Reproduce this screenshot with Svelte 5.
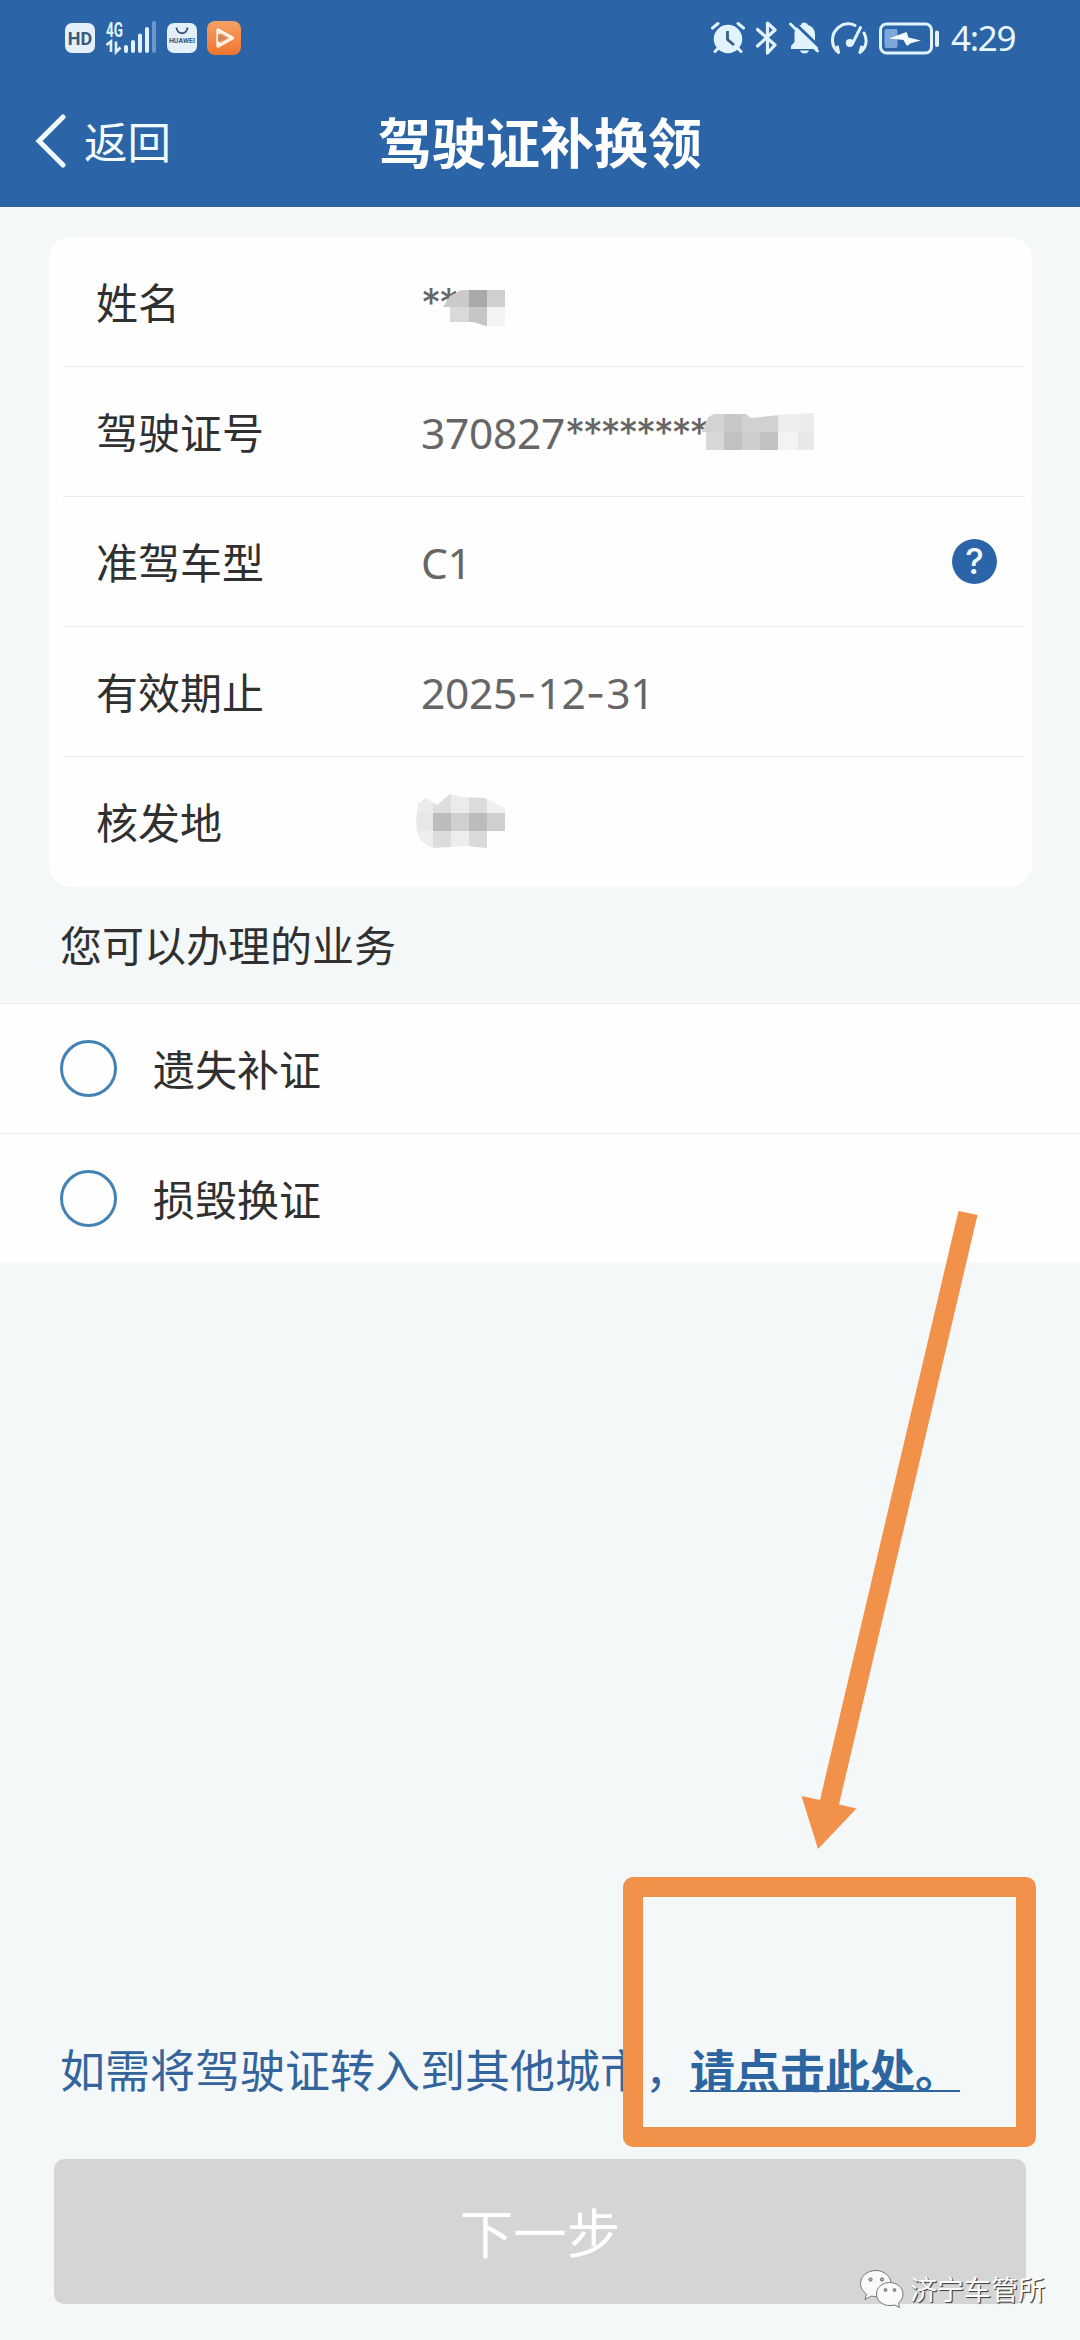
<script>
    let selected = null;

    const details = [
        { key: 'name', label: '姓名', value: '', mask: '**' },
        { key: 'number', label: '驾驶证号', value: '370827', mask: '********' },
        { key: 'type', label: '准驾车型', value: 'C1', mask: '', help: true },
        { key: 'expiry', label: '有效期止', value: '2025-12-31', mask: '' },
        { key: 'issuer', label: '核发地', value: '', mask: '' }
    ];

    // x, y, width, height, fill
    const mosaics = {
        name: {
            x: 22, y: -24, w: 64, h: 50,
            outline: 'M0 29 L7 18 L18 12 H62 V48 H43 L30 44 H7 V29Z',
            cells: [
                [0, 10, 26, 19, '#cbc9ca'], [26, 10, 18, 19, '#aaa8a9'], [44, 10, 18, 19, '#d0cfd0'],
                [0, 29, 26, 20, '#dad9da'], [26, 29, 18, 20, '#c7c6c7'], [44, 29, 18, 20, '#f5f4f5']
            ]
        },
        number: {
            x: 279, y: -21, w: 124, h: 42,
            outline: 'M2 21 L8 6 L14 3 H46 L51 7 L80 4 L114 2 V39 H6 V21Z',
            cells: [
                [0, 0, 24, 21, '#d4d3d4'], [24, 0, 18, 21, '#c9c8c9'], [42, 0, 36, 21, '#d2d0d1'], [78, 0, 20, 21, '#eeeeef'], [98, 0, 18, 21, '#ececec'],
                [0, 21, 24, 19, '#d9d8d9'], [24, 21, 18, 19, '#c2c1c2'], [42, 21, 18, 19, '#cfcdce'], [60, 21, 18, 19, '#c3c2c3'], [78, 21, 20, 19, '#f3f3f4'], [98, 21, 18, 19, '#e9e8e9']
            ]
        },
        issuer: {
            x: -7, y: -32, w: 94, h: 60,
            outline: 'M2 30 L4 14 L12 8 L23 15 L36 4 L48 7 L70 8 L91 18 V41 L73 43 V58 L52 56 L36 57 L18 58 L7 51 L3 42Z',
            cells: [
                [0, 0, 19, 23, '#ecebec'], [19, 0, 18, 23, '#dfdddf'], [37, 0, 18, 23, '#ecebec'], [55, 0, 18, 23, '#dcdadb'], [73, 0, 19, 23, '#f0eff0'],
                [0, 23, 19, 18, '#e8e6e7'], [19, 23, 18, 18, '#bdbbbc'], [37, 23, 18, 18, '#d1d0d1'], [55, 23, 18, 18, '#bdbcbd'], [73, 23, 19, 18, '#d0cecf'],
                [0, 41, 19, 19, '#efeeef'], [19, 41, 18, 19, '#dddbdc'], [37, 41, 18, 19, '#edecee'], [55, 41, 18, 19, '#dbdadb']
            ]
        }
    };

    const options = ['遗失补证', '损毁换证'];
</script>

<div class="screen">
    <div class="top">
        <div class="status">
            <div class="status-left">
                <span class="hd">HD</span>
                <svg class="signal" width="52" height="34" viewBox="0 0 52 34">
                    <text x="0" y="15.5" class="net" textLength="17" lengthAdjust="spacingAndGlyphs">4G</text>
                    <path d="M0.5 24 L5 20.5 V31 M10 20.5 V31 L14.5 26.5" fill="none" stroke="#dff2fd" stroke-width="2.6" />
                    <path d="M20 26 V30 M27 21 V30 M34 14.5 V30 M41 8 V30" stroke="#dff2fd" stroke-width="4" stroke-linecap="round" />
                    <path d="M48 2 V30" stroke="#6b96cf" stroke-width="4" stroke-linecap="round" />
                </svg>
                <span class="store">
                    <svg width="14" height="8" viewBox="0 0 14 8">
                        <path d="M1.5 0.5 C2 8 12 8 12.5 0.5" fill="none" stroke="#3d5878" stroke-width="2" />
                    </svg>
                    <span>HUAWEI</span>
                </span>
                <svg class="video" width="34" height="34" viewBox="0 0 34 34">
                    <defs>
                        <linearGradient id="video-bg" x1="0" y1="0" x2="0" y2="1">
                            <stop offset="0" stop-color="#f6a065" />
                            <stop offset="1" stop-color="#f0762f" />
                        </linearGradient>
                    </defs>
                    <rect width="34" height="34" rx="8" fill="url(#video-bg)" />
                    <path d="M11 9 V25 L25.5 17 Z" fill="#f08a4c" stroke="#fff1e4" stroke-width="3.4" stroke-linejoin="round" />
                    <path d="M11 13 L19 17 L11 21Z" fill="#c98a5e" />
                </svg>
            </div>
            <div class="status-right">
                <svg width="34" height="32" viewBox="0 0 34 32">
                    <circle cx="17" cy="17" r="14.2" fill="#e1f3fe" />
                    <path d="M1.5 6 L7 1.5 M32.5 6 L27 1.5 M7.5 26 L4 29.5 M26.5 26 L30 29.5" stroke="#e1f3fe" stroke-width="3" stroke-linecap="round" />
                    <path d="M16.5 9 V17.5 L23 23" fill="none" stroke="#3b5d83" stroke-width="2.8" />
                </svg>
                <svg width="22" height="34" viewBox="0 0 22 34">
                    <path d="M1.5 8.5 L19 24 L11.5 32 V2 L19 9 L1.5 25" fill="none" stroke="#e1f3fe" stroke-width="3.2" stroke-linejoin="round" stroke-linecap="round" />
                </svg>
                <svg width="31" height="32" viewBox="0 0 31 32">
                    <path d="M15 0.5 C17 0.5 18.5 1.5 19 3 C24 4.5 26 8 26 13 V20 L29 24 V27 H2 V24 L5.5 20 V12 C5.5 7 8 4 12 3 C12.3 1.5 13 0.5 15 0.5Z" fill="#e1f3fe" />
                    <path d="M11 28.5 H20 C19 32.5 12 32.5 11 28.5Z" fill="#e1f3fe" />
                    <path d="M3.5 -1 L31 25.5" stroke="#2c65a7" stroke-width="3" />
                    <path d="M1.5 2 L28.5 29" stroke="#e1f3fe" stroke-width="2.8" stroke-linecap="round" />
                </svg>
                <svg width="37" height="33" viewBox="0 0 37 33">
                    <path d="M7 30 C-1 23 0 11 8 5 C13 1 20 1 24 3.5 M33 11 C37 18 35 26 29.5 30 M6.5 25 L7.5 30.5 M30.5 25 L29 30.5" fill="none" stroke="#e1f3fe" stroke-width="3" stroke-linecap="round" />
                    <path d="M29.5 5.5 L21.5 21.5" stroke="#e1f3fe" stroke-width="3" stroke-linecap="round" />
                    <circle cx="18.8" cy="21" r="4" fill="#e1f3fe" />
                </svg>
                <svg class="battery" width="61" height="33" viewBox="0 0 61 33">
                    <rect x="1.5" y="2" width="51" height="29" rx="6" fill="none" stroke="#e1f3fe" stroke-width="3" />
                    <rect x="5.5" y="7" width="13" height="19" rx="2" fill="#7fa6da" />
                    <path d="M10 16.5 L25.5 18 L27 22.5 L42 18.5 L29.5 15.5 L27.5 10 Z" fill="#f4fbff" />
                    <path d="M24 17 L28 24 L36 18Z" fill="#f4fbff" />
                    <path d="M58 10.5 V23" stroke="#e1f3fe" stroke-width="4" stroke-linecap="round" />
                </svg>
                <span class="clock">4:29</span>
            </div>
        </div>
        <div class="navbar">
            <button class="back">
                <svg width="32" height="54" viewBox="0 0 32 54">
                    <path d="M28 3 L4 27 L28 51" fill="none" stroke="#f2fbff" stroke-width="5" stroke-linecap="round" />
                </svg>
                <span>返回</span>
            </button>
            <h1>驾驶证补换领</h1>
        </div>
    </div>

    <div class="card">
        {#each details as row}
            <div class="row">
                <span class="label">{row.label}</span>
                <div class="value">
                    {#if row.value}
                        <span class="number">{#each row.value.split('-') as part, i}{#if i > 0}<span class="dash">-</span>{/if}{part}{/each}</span>
                    {/if}
                    {#if row.mask}<span class="mask">{row.mask}</span>{/if}
                    {#if mosaics[row.key]}
                        {@const m = mosaics[row.key]}
                        <svg class="mosaic" width={m.w} height={m.h} style="left: {m.x}px; margin-top: {m.y}px;">
                            <clipPath id="clip-{row.key}"><path d={m.outline} /></clipPath>
                            <g clip-path="url(#clip-{row.key})">
                                {#each m.cells as [x, y, w, h, fill]}
                                    <rect {x} {y} width={w} height={h} {fill} shape-rendering="crispEdges" />
                                {/each}
                            </g>
                        </svg>
                    {/if}
                </div>
                {#if row.help}
                    <button class="help">?</button>
                {/if}
            </div>
        {/each}
    </div>

    <h2>您可以办理的业务</h2>

    <div class="options">
        {#each options as option}
            <button class="option" on:click={() => (selected = option)}>
                <span class="radio" class:checked={selected === option}></span>
                <span class="option-text">{option}</span>
            </button>
        {/each}
    </div>

    <div class="bottom">
        <p class="transfer">如需将驾驶证转入到其他城市，<a href="#transfer">请点击此处。</a></p>
        <button class="next">下一步</button>
    </div>

    <svg class="arrow" width="180" height="640" viewBox="0 0 180 640">
        <path d="M158.5 11 L177.5 15 L39 604.5 L56.5 608.5 L18 649 L1.5 596 L20 600Z" fill="#f1914a" />
    </svg>
    <div class="highlight"></div>

    <div class="watermark">
        <svg width="46" height="40" viewBox="0 0 46 40">
            <g fill="#fafafa" stroke="#777" stroke-width="1">
                <path d="M17 1.5 C8 1.5 1.5 7.5 1.5 14.5 C1.5 19 4 22.5 7.5 25 L6 30.5 L12.5 27 C23 30 32 23 32 14.5 C32 7.5 25 1.5 17 1.5Z" />
                <path d="M30.5 13.5 C23 13.5 17.5 18.5 17.5 25 C17.5 33 26 38.5 35.5 36 L40.5 38.5 L39.5 34 C42.5 31.5 44 28.5 44 25 C44 18.5 38 13.5 30.5 13.5Z" />
            </g>
            <g fill="#bbb" stroke="#666" stroke-width="1">
                <circle cx="11.5" cy="10.5" r="1.6" />
                <circle cx="23" cy="10.5" r="1.6" />
                <circle cx="26.5" cy="21" r="1.4" />
                <circle cx="35.5" cy="21" r="1.4" />
            </g>
        </svg>
        <span>济宁车管所</span>
    </div>
</div>

<style>
    :global(body) {
        background: #f4f8f9;
    }

    .screen {
        position: relative;
        display: flex;
        flex-direction: column;
        width: 1080px;
        height: 2340px;
        overflow: hidden;
        background: #f4f8f9;
        color: #303030;
        font-family: "Noto Sans CJK SC", sans-serif;
        font-size: 42px;
    }

    button {
        border: none;
        background: none;
        padding: 0;
        margin: 0;
        font: inherit;
        color: inherit;
    }

    svg {
        display: block;
        flex: none;
    }

    .top {
        height: 207px;
        flex: none;
        background: #2c65a7;
        box-sizing: border-box;
        border-bottom: 1px solid #335f93;
    }

    .status {
        height: 76px;
        padding: 0 66px 0 65px;
        display: flex;
        justify-content: space-between;
        align-items: center;
    }

    .status-left,
    .status-right {
        display: flex;
        align-items: center;
    }

    .hd {
        width: 30px;
        height: 30px;
        line-height: 31px;
        border-radius: 7px;
        background: #e3f0fc;
        color: #3d5878;
        font-family: Roboto, sans-serif;
        font-size: 18px;
        font-weight: 700;
        text-align: center;
    }

    .signal {
        margin-left: 11px;
        overflow: visible;
    }

    .net {
        font-family: Roboto, sans-serif;
        font-size: 20px;
        font-weight: 700;
        fill: #dff2fd;
    }

    .store {
        display: flex;
        flex-direction: column;
        align-items: center;
        width: 30px;
        height: 26px;
        padding-top: 4px;
        margin-left: 9px;
        border-radius: 7px;
        background: #e3f0fc;
        color: #3d5878;
        font-family: Roboto, sans-serif;
        font-size: 7px;
        font-weight: 700;
        line-height: 12px;
    }

    .video {
        margin-left: 10px;
    }

    .status-right {
        gap: 11px;
    }

    .clock {
        width: 63px;
        color: #e8f6ff;
        font-family: "Noto Sans", sans-serif;
        font-size: 35px;
        letter-spacing: -1.3px;
        line-height: 40px;
        white-space: nowrap;
    }

    .navbar {
        position: relative;
        height: 130px;
        display: flex;
        align-items: center;
        justify-content: center;
    }

    .back {
        position: absolute;
        left: 35px;
        top: 38px;
        display: flex;
        align-items: center;
        gap: 17px;
        height: 54px;
        color: #f2fbff;
        font-size: 43.5px;
        line-height: 52px;
    }

    h1 {
        margin: 0;
        color: #fff;
        font-size: 54px;
        font-weight: 700;
        line-height: 70px;
    }

    .card {
        flex: none;
        margin: 30px 48px 0 49px;
        height: 650px;
        padding: 0 7px 0 14px;
        box-sizing: border-box;
        border-radius: 22px;
        background: #fefefe;
    }

    .row {
        display: flex;
        align-items: center;
        height: 129px;
        padding: 0 28px 0 33px;
        border-bottom: 1px solid #ebebeb;
    }

    .row:last-child {
        border-bottom: none;
    }

    .label {
        width: 325px;
        padding-bottom: 3px;
    }

    .value {
        position: relative;
        display: flex;
        align-items: center;
        flex: 1;
        height: 60px;
        color: #666;
        line-height: 60px;
    }

    .number {
        padding-top: 3px;
        font-family: "Noto Sans", sans-serif;
        font-size: 42.5px;
        letter-spacing: -0.3px;
    }

    .dash {
        font-family: Inter, sans-serif;
        letter-spacing: 1px;
    }

    .mask {
        padding-top: 3px;
        font-family: Inter, sans-serif;
        font-size: 40px;
        letter-spacing: -2.3px;
        font-feature-settings: "calt" 0;
    }

    .mosaic {
        position: absolute;
        top: 50%;
    }

    .help {
        width: 45px;
        height: 45px;
        border-radius: 50%;
        background: #2c65a7;
        color: #f2fbff;
        font-family: Inter, sans-serif;
        font-size: 35px;
        font-weight: 500;
        line-height: 45px;
    }

    h2 {
        flex: none;
        margin: 0;
        padding-left: 60px;
        height: 116px;
        font-size: 42px;
        font-weight: 400;
        line-height: 114px;
    }

    .options {
        background: #fefefe;
    }

    .option {
        display: flex;
        align-items: center;
        gap: 36px;
        width: 100%;
        height: 130px;
        box-sizing: border-box;
        padding: 0 60px;
        border-top: 1px solid #ebeeee;
    }

    .option-text {
        padding-bottom: 2px;
    }

    .radio {
        width: 57px;
        height: 57px;
        box-sizing: border-box;
        border: 3px solid #4382b4;
        border-radius: 50%;
    }

    .checked {
        background: #2c65a7;
    }

    .bottom {
        margin-top: auto;
        padding: 0 54px 36px;
    }

    .transfer {
        margin: 0 0 57px 6px;
        color: #33649b;
        font-size: 45px;
        line-height: 66px;
        white-space: nowrap;
    }

    .transfer a {
        color: #2c65a0;
        font-weight: 700;
        text-decoration: underline;
        text-decoration-thickness: 2px;
        text-underline-offset: 2px;
        text-decoration-skip-ink: none;
    }

    .next {
        display: block;
        width: 972px;
        height: 145px;
        padding-bottom: 3px;
        border-radius: 10px;
        background: #d6d5d6;
        color: #fff;
        font-size: 53.5px;
    }

    .arrow {
        position: absolute;
        left: 800px;
        top: 1200px;
        overflow: visible;
    }

    .highlight {
        position: absolute;
        left: 623px;
        top: 1877px;
        width: 413px;
        height: 270px;
        box-sizing: border-box;
        border: 20px solid #f1914a;
        border-radius: 10px;
    }

    .watermark {
        position: absolute;
        left: 859px;
        top: 2269px;
        display: flex;
        align-items: center;
        gap: 5px;
        color: #fff;
        font-size: 27px;
        line-height: 40px;
        text-shadow: 1px 1px 1px #444, 1px 1px 0 #666;
    }
</style>
